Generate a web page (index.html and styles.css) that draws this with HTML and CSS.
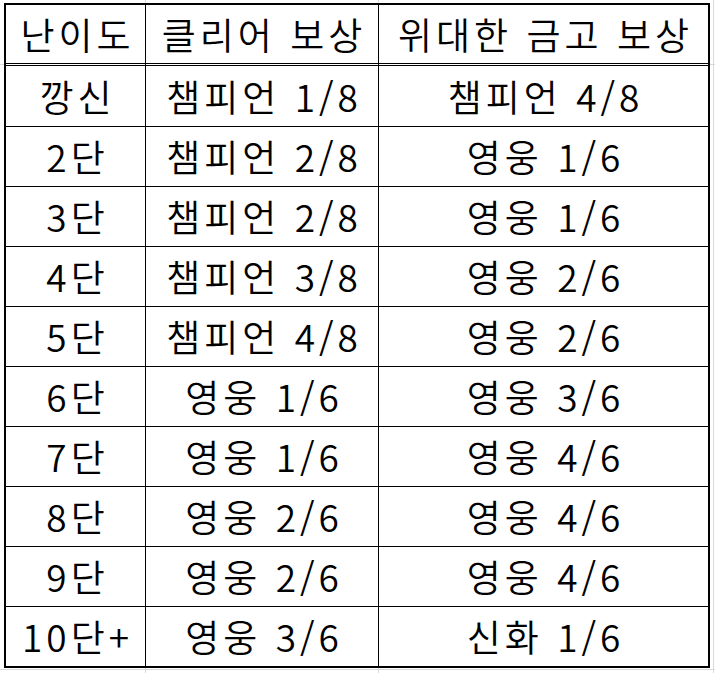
FILE: index.html
```html
<!DOCTYPE html>
<html lang="ko">
<head>
<meta charset="utf-8">
<title>난이도 보상</title>
<link rel="stylesheet" href="styles.css">
</head>
<body>
<div class="sheet">
  <div class="reward-table">
    <div class="cell head">난이도</div>
    <div class="cell head">클리어 보상</div>
    <div class="cell head last-col">위대한 금고 보상</div>

    <div class="cell">깡신</div>
    <div class="cell">챔피언 1/8</div>
    <div class="cell last-col">챔피언 4/8</div>

    <div class="cell">2단</div>
    <div class="cell">챔피언 2/8</div>
    <div class="cell last-col">영웅 1/6</div>

    <div class="cell">3단</div>
    <div class="cell">챔피언 2/8</div>
    <div class="cell last-col">영웅 1/6</div>

    <div class="cell">4단</div>
    <div class="cell">챔피언 3/8</div>
    <div class="cell last-col">영웅 2/6</div>

    <div class="cell">5단</div>
    <div class="cell">챔피언 4/8</div>
    <div class="cell last-col">영웅 2/6</div>

    <div class="cell">6단</div>
    <div class="cell">영웅 1/6</div>
    <div class="cell last-col">영웅 3/6</div>

    <div class="cell">7단</div>
    <div class="cell">영웅 1/6</div>
    <div class="cell last-col">영웅 4/6</div>

    <div class="cell">8단</div>
    <div class="cell">영웅 2/6</div>
    <div class="cell last-col">영웅 4/6</div>

    <div class="cell">9단</div>
    <div class="cell">영웅 2/6</div>
    <div class="cell last-col">영웅 4/6</div>

    <div class="cell last-row">10단+</div>
    <div class="cell last-row">영웅 3/6</div>
    <div class="cell last-row last-col">신화 1/6</div>
  </div>
</div>
</body>
</html>
```

FILE: styles.css
```css
html, body {
  margin: 0;
  padding: 0;
  background: #ffffff;
}

/* spreadsheet grid lines visible around the bordered table */
.sheet {
  width: 715px;
  height: 673px;
  padding: 3px 0 0 4px;
  box-sizing: border-box;
  background-color: #ffffff;
  background-image:
    linear-gradient(#dadada, #dadada),
    linear-gradient(#dadada, #dadada),
    linear-gradient(#dadada, #dadada),
    linear-gradient(#dadada, #dadada),
    linear-gradient(#dadada, #dadada);
  background-size:
    1px 673px,
    1px 673px,
    1px 673px,
    715px 1px,
    715px 1px;
  background-position:
    145px 0,
    378px 0,
    713px 0,
    0 64px,
    0 669px;
  background-repeat: no-repeat;
}

.reward-table {
  display: grid;
  grid-template-columns: 140px 233px 329px;
  grid-template-rows: 61px 61px repeat(8, 60px) 59px;
  width: 706px;
  box-sizing: border-box;
  border: 2px solid #000;
  background: #ffffff;
  font-family: "Noto Sans CJK KR", "Noto Sans", sans-serif;
  font-weight: 350;
  font-size: 37px;
  letter-spacing: 4px;
  color: #000;
}

.cell {
  display: flex;
  align-items: center;
  justify-content: center;
  padding-left: 4px;
  border-right: 1px solid #000;
  border-bottom: 1px solid #000;
  white-space: nowrap;
  line-height: 1;
}

.cell.head {
  border-bottom: 3px double #000;
}

.cell.last-col {
  border-right: none;
}

.cell.last-row {
  border-bottom: none;
}
```
